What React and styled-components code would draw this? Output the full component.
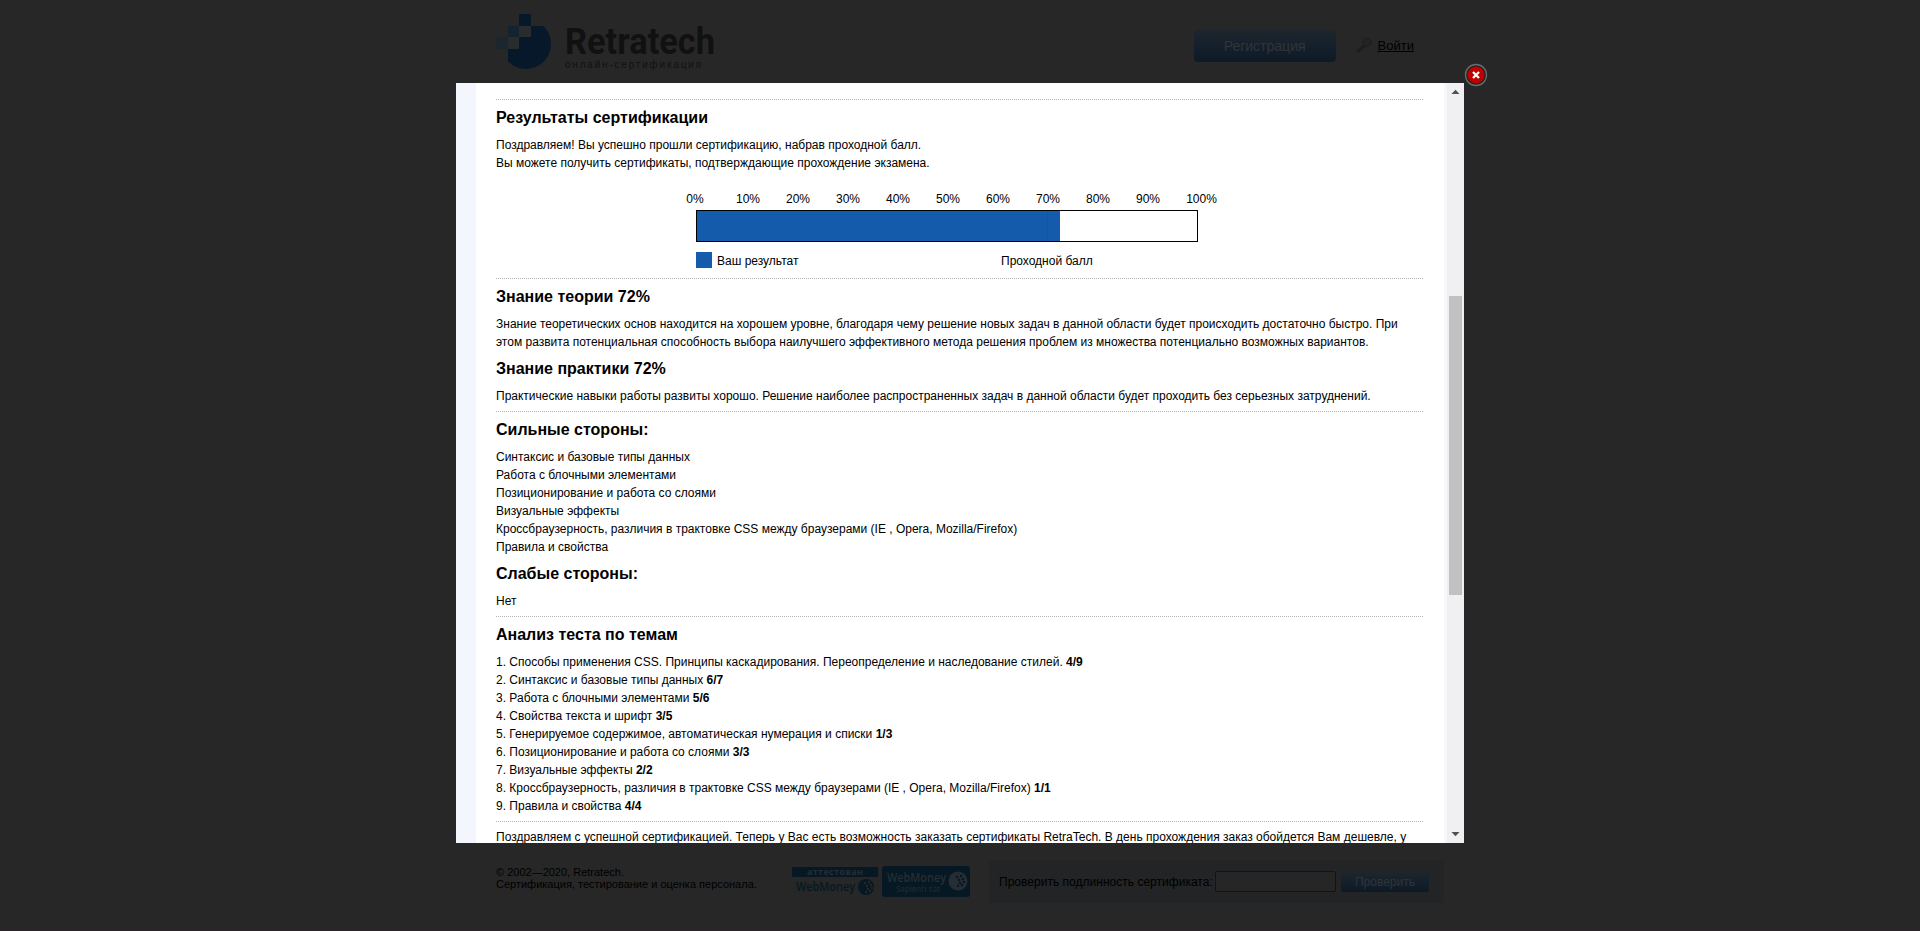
import React from "react";
import styled, { createGlobalStyle } from "styled-components";

const Global = createGlobalStyle`
  *{box-sizing:border-box}
  html,body{margin:0;height:100%;overflow:hidden;background:#272727}
  body{font:12px/18px "Liberation Sans",Arial,sans-serif;color:#000}
`;
const Page = styled.div`
  height:931px;display:flex;flex-direction:column;align-items:center;
  background:#272727;border-bottom:2px solid #2a2528;
`;
const Header = styled.header`
  width:1008px;height:83px;flex:none;padding:14px 50px 0 40px;
  display:flex;justify-content:space-between;
`;
const LogoRow = styled.div`display:flex;gap:14px;`;
const Brand = styled.div`display:flex;flex-direction:column;padding-top:8px;`;
const BrandName = styled.svg`display:block;width:152px;height:36px;overflow:visible;font:bold 37px Roboto,sans-serif;`;
const BrandSub = styled.div`
  font:10px/10px "Liberation Sans",sans-serif;letter-spacing:1.8px;color:#111;white-space:nowrap;margin-top:2px;
`;
const HeaderActions = styled.div`display:flex;align-items:center;height:33px;margin-top:15px;`;
const Button = styled.div`
  width:${p => p.$w}px;height:${p => p.$h}px;border-radius:${p => p.$r}px;
  display:flex;align-items:center;justify-content:center;flex:none;
  font-size:${p => p.$size}px;color:#313438;
  background:linear-gradient(#20262c,#15212d 45%,#0d1a26);
`;
const Key = styled.svg`margin:0 5px 0 20px;display:block;`;
const Login = styled.span`font-size:13px;text-decoration:underline;color:#000;padding-top:1px;`;

const Modal = styled.main`
  position:relative;width:1008px;height:760px;flex:none;display:flex;background:#fff;
`;
const Viewport = styled.div`
  flex:1;height:760px;overflow:hidden;
  border-left:20px solid #f3f6fd;border-right:3px solid #f5f7fb;padding:16px 20px 0;
`;
const Rule = styled.div`height:1px;background:repeating-linear-gradient(90deg,#b4b4b4 0 1px,#fff 1px 2px);margin:${p => p.$top ?? 6}px 0 0;`;
const Title = styled.h2`margin:0;height:36px;font-size:16px;line-height:18px;padding-top:9px;`;
const Text = styled.p`margin:0;white-space:nowrap;padding-top:${p => p.$top || 0}px;`;

const Chart = styled.div`height:106px;padding-top:18px;width:560px;margin-left:174px;`;
const Scale = styled.div`display:flex;height:20px;`;
const Tick = styled.span`
  flex:none;width:50px;text-align:center;
  &:first-child{width:53px;padding-right:3px;}
  &:last-child{width:57px;}
`;
const Bar = styled.div`
  position:relative;width:502px;height:32px;margin-left:26px;border:1px solid #000;background:#fff;
`;
const Fill = styled.div`height:30px;background:#145cab;`;
const Pass = styled.div`position:absolute;top:0;height:30px;width:1px;background:#b01842;`;
const Legend = styled.div`display:flex;height:16px;margin:10px 0 0 26px;line-height:18px;`;
const Swatch = styled.i`flex:none;width:16px;height:16px;background:#145cab;margin-right:5px;`;
const LegendText = styled.span`flex:none;width:${p => p.$w}px;`;

const Scrollbar = styled.div`
  width:17px;height:760px;background:#f0f0f2;display:flex;flex-direction:column;align-items:center;
`;
const Arrow = styled.svg`display:block;width:17px;height:17px;`;
const Thumb = styled.div`width:13px;height:299px;background:#c1c1c1;margin:196px 0 231px;`;
const Close = styled.svg`position:absolute;left:1008px;top:-20px;width:24px;height:24px;`;

const Footer = styled.footer`
  width:1008px;flex:1;padding:17px 20px 0 40px;display:flex;align-items:flex-start;
`;
const Copyright = styled.div`flex:none;width:296px;font-size:11px;line-height:12px;padding-top:6px;white-space:nowrap;color:#000;`;
const Badge = styled.svg`display:block;flex:none;margin:5px 4px 0 0;`;
const CheckBox = styled.div`
  flex:none;width:455px;height:43px;margin-left:15px;padding-left:10px;background:#222426;
  display:flex;align-items:center;white-space:nowrap;
`;
const Label = styled.span`flex:none;width:216px;letter-spacing:0.02px;`;
const Input = styled.div`flex:none;width:121px;height:21px;border:1px solid #111314;border-radius:2px;background:#272626;margin-right:5px;`;

const strengths = [
  "Синтаксис и базовые типы данных", "Работа с блочными элементами",
  "Позиционирование и работа со слоями", "Визуальные эффекты",
  "Кроссбраузерность, различия в трактовке CSS между браузерами (IE , Opera, Mozilla/Firefox)",
  "Правила и свойства",
];
const topics = [
  ["Способы применения CSS. Принципы каскадирования. Переопределение и наследование стилей.", "4/9"],
  ["Синтаксис и базовые типы данных", "6/7"],
  ["Работа с блочными элементами", "5/6"],
  ["Свойства текста и шрифт", "3/5"],
  ["Генерируемое содержимое, автоматическая нумерация и списки", "1/3"],
  ["Позиционирование и работа со слоями", "3/3"],
  ["Визуальные эффекты", "2/2"],
  ["Кроссбраузерность, различия в трактовке CSS между браузерами (IE , Opera, Mozilla/Firefox)", "1/1"],
  ["Правила и свойства", "4/4"],
];
const ticks = [0, 10, 20, 30, 40, 50, 60, 70, 80, 90, 100];

const LogoMark = () => (
  <svg width="55" height="55" viewBox="0 0 55 55">
    <path d="M12 12H47.300A25 25 0 0 1 55 30A25 25 0 0 1 30 55A25 25 0 0 1 12 47.300Z" fill="#07182b" />
    <path d="M23 0H35V12H23Z" fill="#07182b" />
    <path d="M12 12H23V23H12Z" fill="#132430" />
    <path d="M23 12H35V23H23ZM12 23H23V35H12Z" fill="#292c2f" />
    <path d="M0 23H12V35H0Z" fill="#1d252d" />
  </svg>
);
const Globe = ({ x, y, r, fill, dot }) => (
  <g transform={`translate(${x} ${y})`}>
    <circle r={r} fill={fill} />
    {[[-1, -4], [3, -5], [1, -1], [5, -2], [2, 2], [6, 1], [0, 5], [4, 4]].map(([a, b], i) => (
      <circle key={i} cx={a} cy={b} r="1.25" fill={dot} />
    ))}
  </g>
);

export default function App() {
  return (
    <Page>
      <Global />
      <Header>
        <LogoRow>
          <LogoMark />
          <Brand>
            <BrandName><text x="0" y="32" textLength="150" lengthAdjust="spacingAndGlyphs" fill="#111">Retratech</text></BrandName>
            <BrandSub>онлайн-сертификация</BrandSub>
          </Brand>
        </LogoRow>
        <HeaderActions>
          <Button $w={142} $h={33} $r={4} $size={14}>Регистрация</Button>
          <Key width="17" height="17" viewBox="0 0 17 17">
            <path d="M2 14L9 8" stroke="#1e1e1e" strokeWidth="3" strokeLinecap="round" />
            <circle cx="11" cy="5.500" r="4" fill="#232323" stroke="#1f1f1f" strokeWidth="1.500" />
          </Key>
          <Login>Войти</Login>
        </HeaderActions>
      </Header>
      <Modal>
        <Viewport>
          <Rule $top={0} />
          <Title>Результаты сертификации</Title>
          <Text>Поздравляем! Вы успешно прошли сертификацию, набрав проходной балл.</Text>
          <Text>Вы можете получить сертификаты, подтверждающие прохождение экзамена.</Text>
          <Chart>
            <Scale>{ticks.map(t => <Tick key={t}>{t}%</Tick>)}</Scale>
            <Bar><Fill style={{ width: "72.6%" }} /><Pass style={{ left: "70%" }} /></Bar>
            <Legend><Swatch /><LegendText $w={284}>Ваш результат</LegendText><LegendText $w={100}>Проходной балл</LegendText></Legend>
          </Chart>
          <Rule $top={0} />
          <Title>Знание теории 72%</Title>
          <Text>Знание теоретических основ находится на хорошем уровне, благодаря чему решение новых задач в данной области будет происходить достаточно быстро. При</Text>
          <Text>этом развита потенциальная способность выбора наилучшего эффективного метода решения проблем из множества потенциально возможных вариантов.</Text>
          <Title>Знание практики 72%</Title>
          <Text>Практические навыки работы развиты хорошо. Решение наиболее распространенных задач в данной области будет проходить без серьезных затруднений.</Text>
          <Rule />
          <Title>Сильные стороны:</Title>
          {strengths.map(s => <Text key={s}>{s}</Text>)}
          <Title>Слабые стороны:</Title>
          <Text>Нет</Text>
          <Rule />
          <Title>Анализ теста по темам</Title>
          {topics.map(([t, n], i) => <Text key={t}>{i + 1}. {t} <b>{n}</b></Text>)}
          <Rule />
          <Text $top={6}>Поздравляем с успешной сертификацией. Теперь у Вас есть возможность заказать сертификаты RetraTech. В день прохождения заказ обойдется Вам дешевле, у</Text>
        </Viewport>
        <Scrollbar>
          <Arrow><path d="M4.500 11L8.500 6.800L12.500 11Z" fill="#505050" /></Arrow>
          <Thumb />
          <Arrow><path d="M4.500 6L8.500 10.200L12.500 6Z" fill="#505050" /></Arrow>
        </Scrollbar>
        <Close viewBox="0 0 24 24">
          <circle cx="12" cy="12" r="10.500" fill="#222" stroke="#6c6c6c" strokeWidth="1.300" />
          <circle cx="12" cy="12" r="8.500" fill="#c00000" />
          <path d="M9 9L15 15M15 9L9 15" stroke="#fff" strokeWidth="2.300" />
        </Close>
      </Modal>
      <Footer>
        <Copyright>© 2002—2020, Retratech.<br />Сертификация, тестирование и оценка персонала.</Copyright>
        <Badge width="86" height="32" fontFamily="Open Sans" fontWeight="600">
          <rect y="2" width="86" height="10" fill="#051824" />
          <text x="15" y="10" fontSize="9" fontWeight="700" textLength="56" fill="#272e33">аттестован</text>
          <text x="4" y="26" fontSize="12" textLength="59" lengthAdjust="spacingAndGlyphs" fill="#051824">WebMoney</text>
          <Globe x={74} y={22} r={8} fill="#051824" dot="#272727" />
        </Badge>
        <Badge width="88" height="32" fontFamily="Open Sans" fontWeight="600">
          <rect y="1" width="88" height="31" rx="3" fill="#051824" />
          <text x="5" y="17" fontSize="12" textLength="59" lengthAdjust="spacingAndGlyphs" fill="#272e33">WebMoney</text>
          <text x="14" y="27" fontSize="8" textLength="44" lengthAdjust="spacingAndGlyphs" fill="#20282e">Sapienti sat</text>
          <Globe x={76} y={16} r={9.5} fill="#272e33" dot="#051824" />
        </Badge>
        <CheckBox>
          <Label>Проверить подлинность сертификата:</Label>
          <Input />
          <Button $w={88} $h={21} $r={2} $size={12}>Проверить</Button>
        </CheckBox>
      </Footer>
    </Page>
  );
}
